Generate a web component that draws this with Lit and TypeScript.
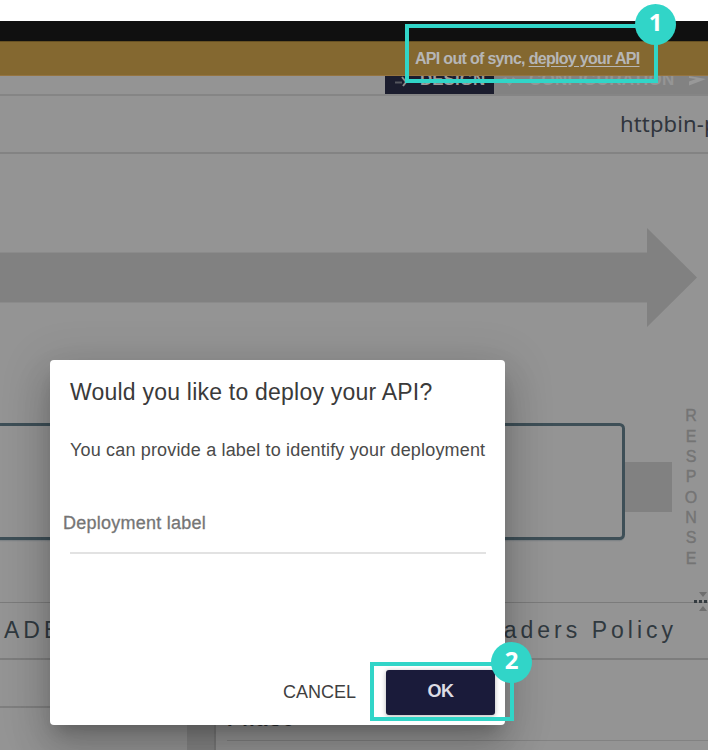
import { LitElement, html, css, svg } from "lit";
import { customElement } from "lit/decorators.js";

@customElement("step-marker")
class StepMarker extends LitElement {
  static styles = css`
    :host { position: absolute; box-sizing: border-box; border: 4px solid #31d5c8; }
    .badge {
      position: absolute; width: 41px; height: 41px; border-radius: 50%;
      background: #31d5c8; color: #fff; display: flex; align-items: center;
      justify-content: center; font: 700 24px/1 "Noto Sans", sans-serif;
      box-sizing: border-box; padding-bottom: 5px; right: -22px; top: -24px;
    }
  `;
  render() {
    return html`<div class="badge"><slot></slot></div>`;
  }
}

@customElement("flow-canvas")
class FlowCanvas extends LitElement {
  static styles = css`
    :host { display: block; height: 448px; }
    svg { display: block; }
    .letter { font: 16px "Liberation Sans", sans-serif; fill: #747474; stroke: #747474; stroke-width: .4px; text-anchor: middle; }
  `;
  render() {
    return html`<svg width="708" height="448" viewBox="0 154 708 448">
      <path d="M0 252.5H647V228L697 277.5L647 327V302.5H0Z" fill="#818181" />
      <rect x="625" y="462" width="47" height="50" fill="#818181" />
      <rect x="-10" y="426.3" width="633.7" height="114" rx="4" fill="none" stroke="#7f8487" stroke-width="2" />
      <rect x="-10" y="424.5" width="633.5" height="114" rx="4" fill="#949494" stroke="#3e4f57" stroke-width="3" />
      ${"RESPONSE".split("").map(
        (c, i) => svg`<text class="letter" x="691" y=${421.3 + i * 20.35}>${c}</text>`
      )}
    </svg>`;
  }
}

@customElement("deploy-dialog")
class DeployDialog extends LitElement {
  static styles = css`
    :host {
      position: absolute; left: 50px; top: 360px; width: 455px; height: 365px;
      box-sizing: border-box; padding: 0 19px 0 20px; background: #fff; border-radius: 4px;
      display: flex; flex-direction: column; color: #3f3f3f;
      font-family: "Liberation Sans", sans-serif; white-space: nowrap;
      box-shadow: 0 11px 15px -7px rgba(0,0,0,.2), 0 24px 38px 3px rgba(0,0,0,.14), 0 9px 46px 8px rgba(0,0,0,.12);
    }
    .title { font-size: 23px; line-height: 28px; margin-top: 18px; letter-spacing: .22px; color: #3a3a3a; }
    .info { font-size: 18px; line-height: 24px; margin-top: 32px; letter-spacing: .17px; color: #4a4a4a; }
    .field { border-bottom: 2px solid #e2e2e2; height: 48px; margin-top: 42px; }
    .label { font-size: 18px; line-height: 39px; margin-left: -7px; letter-spacing: .24px; color: #757575; -webkit-text-stroke: .3px #757575; }
    .actions { display: flex; justify-content: flex-end; align-items: center; margin: 116px -9px 0 0; gap: 30px; }
    .cancel { font-size: 18px; letter-spacing: -.02px; line-height: 42px; padding-bottom: 2px; }
    .ok {
      width: 109px; height: 45px; line-height: 43px; text-align: center; border-radius: 3px;
      background: #1a1b3a; color: #dcdce4; font-size: 18px; font-weight: 700; letter-spacing: -.5px;
      box-shadow: 0 1px 5px rgba(0,0,0,.3);
    }
  `;
  render() {
    return html`
      <div class="title">Would you like to deploy your API?</div>
      <div class="info">You can provide a label to identify your deployment</div>
      <div class="field"><div class="label">Deployment label</div></div>
      <div class="actions"><div class="cancel">CANCEL</div><div class="ok">OK</div></div>
    `;
  }
}

@customElement("app-root")
class AppRoot extends LitElement {
  static styles = css`
    :host {
      display: flex; flex-direction: column; position: relative; width: 708px; height: 750px;
      overflow: hidden; box-sizing: border-box; padding-top: 21px; background: #fff;
      font-family: "Liberation Sans", sans-serif; white-space: nowrap;
    }
    .top { height: 20px; background: #101010; flex: none; }
    .banner {
      height: 35px; flex: none; box-sizing: border-box; padding-left: 415px; background: #846830;
      border-top: 1px solid #675123; border-bottom: 1px solid #957440; color: #b6b6b6;
      font-size: 16px; line-height: 33px; font-weight: 700; letter-spacing: -.69px;
    }
    .link { text-decoration: underline; text-underline-offset: 2px; }
    .page { flex: 1; background: #949494; display: flex; flex-direction: column; min-height: 0; }
    .tabs { height: 18px; flex: none; display: flex; padding-left: 385px; border-bottom: 2px solid #858585; overflow: hidden; }
    .tab { display: flex; align-items: flex-start; font-size: 17px; line-height: 18px; font-weight: 700; }
    .tab span { margin-top: -5px; }
    .design { width: 109px; flex: none; height: 18px; background: #1b1d2e; color: #9b9b9b; }
    .design span { margin-left: 9px; }
    .config { flex: 1; background: #828282; color: #959595; letter-spacing: .25px; }
    .config span { margin-left: 9px; }
    .ico { flex: none; display: block; }
    .arrow { margin-left: 8px; }
    .gear { margin-left: 6px; }
    .send { margin-left: 13px; }
    .name {
      height: 56px; flex: none; border-bottom: 2px solid #838383; padding-left: 620px;
      font: 22px/55px "Noto Sans", sans-serif; letter-spacing: .15px; color: #30353d;
    }
    .heading {
      height: 55px; flex: none; border-top: 1px solid #7b7b7b; border-bottom: 2px solid #7d7d7d;
      display: flex; justify-content: space-between; padding: 0 31px 0 4px;
      font-size: 23px; line-height: 54px; letter-spacing: 4px; color: #30393f;
    }
    .lower { flex: 1; display: flex; min-height: 0; }
    .menu { width: 187px; }
    .entry { height: 46px; border-bottom: 2px solid #7f7f7f; }
    .gutter { width: 27px; background: #848484; }
    .props { flex: 1; border-left: 2px solid #797979; padding-left: 11px; }
    .phase {
      height: 81px; border-bottom: 1px solid #828282; box-sizing: border-box; padding-top: 45px;
      font-size: 20px; line-height: 28px; font-weight: 700; letter-spacing: 1.9px; color: #272b2e;
    }
    .handle { position: absolute; left: 694px; top: 590px; }
    .one { left: 405px; top: 24px; width: 253px; height: 59px; }
    .two { left: 370px; top: 662px; width: 144px; height: 59px; }
  `;
  render() {
    return html`
      <div class="top"></div>
      <div class="banner">API out of sync, <span class="link">deploy your API</span></div>
      <div class="page">
        <div class="tabs">
          <div class="tab design">
            <svg class="ico arrow" width="18" height="18" viewBox="0 0 18 18">
              <path d="M2 6.5H9" fill="none" stroke="#55575f" stroke-width="2" />
              <path d="M9 1L13 6L10 10" fill="none" stroke="#8c8c8c" stroke-width="2" />
            </svg>
            <span>DESIGN</span>
          </div>
          <div class="tab config">
            <svg class="ico gear" width="20" height="18" viewBox="0 0 20 18">
              <path d="M2 3L6 1L8 4H11L13 1L17 4L13 6L9.500 10L6 6Z" fill="#929292" />
            </svg>
            <span>CONFIGURATION</span>
            <svg class="ico send" width="20" height="18" viewBox="0 0 20 18">
              <path d="M1 0L18 3L1 9.500V5.500L8 3L1 2Z" fill="#989898" />
            </svg>
          </div>
        </div>
        <div class="name">httpbin-policy</div>
        <flow-canvas></flow-canvas>
        <div class="heading"><span>ADER</span><span>Headers Policy</span></div>
        <div class="lower">
          <div class="menu"><div class="entry"></div></div>
          <div class="gutter"></div>
          <div class="props"><div class="phase">Phase</div></div>
        </div>
      </div>
      <svg class="handle" width="14" height="24" viewBox="694 590 14 24">
        <path d="M699 592H707L703 597ZM699 611H707L703 606Z" fill="#6f6f6f" />
        <path d="M694 601.5H708" stroke="#343b40" stroke-width="3" stroke-dasharray="3 2" />
      </svg>
      <deploy-dialog></deploy-dialog>
      <step-marker class="one">1</step-marker>
      <step-marker class="two">2</step-marker>
    `;
  }
}
